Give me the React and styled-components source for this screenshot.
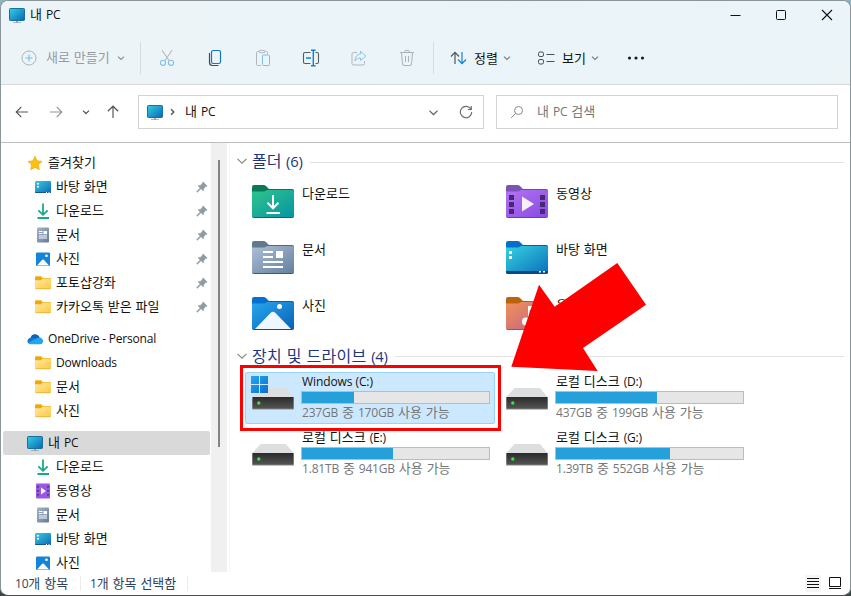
import React from "react";
import styled, { createGlobalStyle, css } from "styled-components";

const Global = createGlobalStyle`
  * { box-sizing: border-box; }
  html, body { margin: 0; padding: 0; }
  body {
    background: linear-gradient(#8fb3bc 0, #8fb3bc 30px, #3a4645 560px);
    font-family: "Noto Sans CJK KR", "Open Sans", sans-serif;
    font-size: 13px;
    color: #111;
    overflow: hidden;
  }
`;

/* ---------- text ---------- */

const TextLine = styled.span`
  display: block;
  white-space: pre;
  line-height: 18px;
  font-size: ${(p) => p.$size || 13}px;
  letter-spacing: ${(p) => p.$ls || 0}px;
  word-spacing: ${(p) => p.$ws}px;
  color: ${(p) => p.$color || "#111"};
`;

const Latin = styled.span`
  font-family: "Open Sans", "Noto Sans", sans-serif;
  font-size: 0.925em;
  letter-spacing: ${(p) => p.$lls ?? -0.2}px;
`;

function Text({ children, size, ls, lls, ws, color }) {
  const value = String(children);
  const parts = value.match(/[\uAC00-\uD7A3]+|[^\uAC00-\uD7A3]+/g);
  const spacing = ws ?? (/[\uAC00-\uD7A3]/.test(value) ? 1 : 0);
  return (
    <TextLine $size={size} $ls={ls} $ws={spacing} $color={color}>
      {parts.map((part, i) =>
        /[\uAC00-\uD7A3]/.test(part) ? (
          <span key={i}>{part}</span>
        ) : (
          <Latin key={i} $lls={lls}>{part}</Latin>
        )
      )}
    </TextLine>
  );
}

/* ---------- window chrome ---------- */

const Window = styled.div`
  position: relative;
  width: 851px;
  height: 596px;
  display: flex;
  flex-direction: column;
  background: #fff;
  border: 1px solid #8b969b;
  border-bottom-color: #475250;
  border-radius: 8px;
  overflow: hidden;
`;

const Header = styled.header`
  height: 84px;
  flex: none;
  background: linear-gradient(100deg, #edf4f8 0%, #ebf4f8 45%, #eaf4f9 75%, #ecf4f8 100%);
  border-bottom: 1px solid #d5d9dc;
`;

const TitleBar = styled.div`
  display: flex;
  align-items: center;
  height: 29px;
  padding: 0 14px 0 8px;
`;

const TitleName = styled.div`
  display: flex;
  align-items: center;
  gap: 5px;
  flex: 1;
  & > svg { margin-bottom: 1px; }
  & > span { margin-bottom: 2px; }
`;

const WindowButtons = styled.div`
  display: flex;
  gap: 34px;
  padding: 0 3px 1px 0;
  svg { display: block; }
`;

const Toolbar = styled.div`
  display: flex;
  align-items: center;
  height: 54px;
  padding: 2px 0 0;
`;

const ToolButton = styled.div`
  display: flex;
  align-items: center;
  flex: none;
  width: ${(p) => p.$w || 48}px;
  padding-left: ${(p) => p.$pl || 0}px;
  gap: ${(p) => p.$gap || 8}px;
  ${(p) => !p.$labelled && css`justify-content: center;`}
  & > span { margin: 0 -1px 1px 1px; }
`;

const Separator = styled.div`
  flex: none;
  width: 1px;
  height: 32px;
  margin-right: ${(p) => p.$mr || 0}px;
  margin-left: ${(p) => p.$ml || 0}px;
  background: #d6dde1;
`;

const NavBar = styled.div`
  display: flex;
  align-items: center;
  flex: none;
  height: 58px;
  padding: 0 12px 3px 14px;
  border-bottom: 1px solid #bdbdbd;
`;

const NavArrows = styled.div`
  display: flex;
  align-items: center;
  width: 123px;
  svg { flex: none; }
`;

const Arrow = styled.div`
  display: flex;
  justify-content: center;
  width: ${(p) => p.$w}px;
`;

const Field = styled.div`
  display: flex;
  align-items: center;
  height: 34px;
  border: 1px solid #d2d3d4;
  background: #fff;
  & span { margin-bottom: 1px; }
`;

const AddressField = styled(Field)`
  width: 346px;
  padding: 0 10px 0 8px;
  margin-right: 12px;
`;

const Crumb = styled.div`
  display: flex;
  align-items: center;
  flex: 1;
  gap: 6px;
  & > svg:first-child { margin-bottom: 1px; }
  & > span { margin-left: 3px; }
`;

const AddressTools = styled.div`
  display: flex;
  align-items: center;
  gap: 20px;
`;

const SearchField = styled(Field)`
  width: 342px;
  padding-left: 13px;
  gap: 13px;
`;

/* ---------- body ---------- */

const Body = styled.div`
  display: flex;
  height: 429px;
  flex: none;
  overflow: hidden;
`;

const Sidebar = styled.nav`
  width: 210px;
  flex: none;
  padding: 8px 1px 0 2px;
  overflow: hidden;
`;

const SideGroup = styled.div`
  margin-bottom: 8px;
`;

const SideItem = styled.div`
  display: flex;
  align-items: center;
  height: 24px;
  padding: 0 2px 0 ${(p) => (p.$root ? 24 : 32)}px;
  gap: 5px;
  border-radius: 2px;
  background: ${(p) => (p.$active ? "#d9d9d9" : "transparent")};
`;

const SideLabel = styled.div`
  flex: 1;
  margin-top: -2px;
`;

const ScrollTrack = styled.div`
  width: 16px;
  flex: none;
  background: #f0f0f0;
  padding: 17px 0 0 7px;
`;

const ScrollThumb = styled.div`
  width: 2px;
  height: 287px;
  background: #858585;
`;

const Content = styled.main`
  flex: 1;
  margin-left: 2px;
  border-left: 1px solid #f7f7f7;
  padding-left: 7px;
`;

const SectionHead = styled.div`
  display: flex;
  align-items: center;
  height: ${(p) => p.$h}px;
  padding: ${(p) => p.$pt || 0}px 6px ${(p) => p.$pb || 0}px 0;
  &::after {
    content: "";
    flex: 1;
    height: 1px;
    margin: 3px 0 0 7px;
    background: #e2e2e2;
  }
  svg { flex: none; margin: 1px 4px 0 -1px; }
`;

const Grid = styled.div`
  display: grid;
  grid-template-columns: 250px 250px;
  gap: 4px;
  padding-left: 8px;
`;

const Tile = styled.div`
  display: flex;
  height: 52px;
  padding-left: ${(p) => (p.$drive ? 5 : 6)}px;
  border: 1px solid ${(p) => (p.$selected ? "#99d1ff" : "transparent")};
  background: ${(p) => (p.$selected ? "#cce8ff" : "transparent")};
  border-radius: 2px;
  & > svg { flex: none; }
`;

const FolderName = styled.div`
  padding: 7px 0 0 8px;
`;

const DriveInfo = styled.div`
  display: flex;
  flex-direction: column;
  padding-left: 6px;
  & > span { padding-left: 1px; margin-top: -1px; }
`;

const Meter = styled.div`
  width: 189px;
  height: 13px;
  border: 1px solid #bcbcbc;
  background: #e6e6e6;
`;

const MeterFill = styled.div`
  height: 100%;
  background: #26a0da;
`;

const StatusBar = styled.footer`
  display: flex;
  align-items: center;
  flex: 1;
  padding: 0 7px 1px 14px;
`;

const StatusText = styled.div`
  width: ${(p) => p.$w}px;
`;

const StatusRule = styled.div`
  width: 1px;
  height: 15px;
  background: #ececec;
  margin-right: ${(p) => p.$mr || 0}px;
`;

const ViewModes = styled.div`
  display: flex;
  gap: 6px;
  margin-left: auto;
  svg { display: block; }
`;

const ModeButton = styled.div`
  padding: 2px 1px;
  background: ${(p) => (p.$on ? "#f5f5f5" : "transparent")};
`;

const Highlight = styled.div`
  position: absolute;
  left: 239px;
  top: 364px;
  width: 261px;
  height: 66px;
  border: 3px solid #fe0000;
`;

const Pointer = styled.svg`
  position: absolute;
  left: 509px;
  top: 261px;
`;

/* ---------- icons ---------- */

const Monitor = () => (
  <svg width="16" height="16" viewBox="0 0 16 16">
    <defs>
      <linearGradient id="mon" x1="0" y1="0" x2="1" y2="1">
        <stop offset="0" stopColor="#35cfe4" />
        <stop offset="1" stopColor="#0b66b4" />
      </linearGradient>
    </defs>
    <rect x="0.5" y="1.5" width="15" height="12" rx="0.8" fill="url(#mon)" stroke="#14709f" strokeWidth="1" />
    <path d="M7 14h2v1.2h3v.8H4v-.8h3z" fill="#9aa4ab" />
  </svg>
);

const Chevron = ({ size = 8, color = "#777", w = 1.1 }) => (
  <svg width={size} height={size} viewBox="0 0 8 8" fill="none" stroke={color} strokeWidth={w}>
    <path d="M1 2.6 4 5.5 7 2.6" />
  </svg>
);

const PlusCircle = () => (
  <svg width="16" height="16" viewBox="0 0 16 16" fill="none">
    <circle cx="8" cy="8" r="7" stroke="#adb4b8" />
    <path d="M8 4.5v7M4.5 8h7" stroke="#76b9e6" />
  </svg>
);

const Scissors = () => (
  <svg width="16" height="18" viewBox="0 0 16 18" fill="none">
    <path d="M3 1.2 10.4 12M13 1.2 5.6 12" stroke="#b4babe" strokeWidth="1.1" />
    <circle cx="4" cy="13.8" r="2.6" stroke="#83c0ea" strokeWidth="1.1" />
    <circle cx="12" cy="13.8" r="2.6" stroke="#83c0ea" strokeWidth="1.1" />
  </svg>
);

const Copy = () => (
  <svg width="16" height="18" viewBox="0 0 16 18" fill="none">
    <path d="M2.5 4v9.500A3 3 0 0 0 5.500 16.500h6" stroke="#454b50" strokeWidth="1.200" />
    <rect x="4.500" y="1.500" width="9" height="13" rx="1.800" stroke="#1276c8" strokeWidth="1.200" />
  </svg>
);

const Paste = () => (
  <svg width="16" height="18" viewBox="0 0 16 18" fill="none">
    <path d="M6 16.500H2.500a1 1 0 0 1-1-1v-12a1 1 0 0 1 1-1h9a1 1 0 0 1 1 1v1.500" stroke="#b3b8bc" />
    <rect x="4" y="1.400" width="6" height="2.300" rx="1" stroke="#b3b8bc" fill="#eaf3f8" />
    <rect x="7.500" y="6" width="7" height="10.500" rx="1" stroke="#7fbde8" />
  </svg>
);

const Rename = () => (
  <svg width="18" height="18" viewBox="0 0 18 18" fill="none">
    <path d="M8.500 3.500H3a1.500 1.500 0 0 0-1.500 1.500v8A1.500 1.500 0 0 0 3 14.500h5.500M13.500 3.500H15A1.500 1.500 0 0 1 16.500 5v8a1.500 1.500 0 0 1-1.500 1.500h-1.500" stroke="#555c61" strokeWidth="1.100" />
    <path d="M11.300 1.500v15M9 1.300h4.600M9 16.700h4.600M4 9h5" stroke="#1680d0" strokeWidth="1.400" />
  </svg>
);

const Share = () => (
  <svg width="18" height="18" viewBox="0 0 18 18" fill="none">
    <path d="M7 3.500H3.500a1.500 1.500 0 0 0-1.500 1.500v9.500A1.500 1.500 0 0 0 3.500 16h9.500a1.500 1.500 0 0 0 1.500-1.500V12" stroke="#b1b7bb" />
    <path d="M10.500 2.300 15.800 7l-5.300 4.500V9C8 9 6.300 9.800 5 12c0-4 2-6.700 5.500-7z" stroke="#88c3ea" strokeLinejoin="round" />
  </svg>
);

const Trash = () => (
  <svg width="16" height="18" viewBox="0 0 16 18" fill="none" stroke="#acb2b6">
    <path d="M1 3.500h14M5.500 3.300a2.500 2 0 0 1 5 0M2.500 3.500l1 11.500a1.500 1.500 0 0 0 1.500 1.500h6a1.500 1.500 0 0 0 1.500-1.500l1-11.500M6.500 7v6M9.500 7v6" />
  </svg>
);

const Sort = () => (
  <svg width="17" height="14" viewBox="0 0 17 14" fill="none" strokeWidth="1.200">
    <path d="M5 13V1.500M1 5.500 5 1.300 9 5.500" stroke="#50565b" />
    <path d="M12 1v11.500M8 8.500l4 4.200 4-4.200" stroke="#1680d0" />
  </svg>
);

const ViewIcon = () => (
  <svg width="17" height="14" viewBox="0 0 17 14" fill="none" stroke="#4c5156">
    <rect x="0.500" y="1" width="5" height="4.500" rx="1.500" />
    <rect x="0.500" y="8.500" width="5" height="4.500" rx="1.500" />
    <path d="M8.500 3.500h8M8.500 10.500h8" />
  </svg>
);

const Dots = () => (
  <svg width="18" height="4" viewBox="0 0 18 4" fill="#1c1f21">
    <circle cx="2.500" cy="2" r="1.600" />
    <circle cx="9" cy="2" r="1.600" />
    <circle cx="15.500" cy="2" r="1.600" />
  </svg>
);

const ArrowGlyph = ({ color = "#55595c", turn = 0 }) => (
  <svg width="14" height="14" viewBox="0 0 14 14" fill="none" stroke={color} strokeWidth="1.200">
    <path transform={`rotate(${turn} 7 7)`} d="M13 7H1.300M6.300 1.800 1.200 7l5.100 5.200" />
  </svg>
);

const Refresh = () => (
  <svg width="14" height="14" viewBox="0 0 14 14" fill="none" stroke="#6b6e71" strokeWidth="1.150">
    <path d="M12 4.300A5.700 5.700 0 1 0 12.700 7M12.300 1v3.500H8.800" />
  </svg>
);

const Magnifier = () => (
  <svg width="14" height="14" viewBox="0 0 14 14" fill="none" stroke="#85898d">
    <circle cx="8.500" cy="5.500" r="4" />
    <path d="M5.600 8.400 1.200 12.800" />
  </svg>
);

const Star = () => (
  <svg width="16" height="16" viewBox="0 0 16 16">
    <path d="M8 1.300 10.100 5.800l4.900.600-3.600 3.400.900 4.900L8 12.400l-4.300 2.300.900-4.900L1 6.400l4.900-.600z" fill="#fdc112" stroke="#f3a80c" strokeWidth="0.700" strokeLinejoin="round" />
  </svg>
);

const DesktopSmall = () => (
  <svg width="16" height="16" viewBox="0 0 16 16">
    <defs>
      <linearGradient id="ds" x1="0" y1="0" x2="1" y2="1">
        <stop offset="0" stopColor="#38cde0" />
        <stop offset="1" stopColor="#0c69b8" />
      </linearGradient>
    </defs>
    <rect y="2" width="16" height="12" rx="1.200" fill="url(#ds)" />
    <path d="M0 13h16a1 1 0 0 1-1 1H1a1 1 0 0 1-1-1z" fill="#0c5596" />
    <path d="M2 4h2v1.500H2zM2 7h2v1.500H2zM11 13h1v1h-1zM13.500 13h1v1h-1z" fill="#fff" />
  </svg>
);

const DownloadSmall = () => (
  <svg width="16" height="16" viewBox="0 0 16 16" fill="none" stroke="#18a98b" strokeWidth="1.800">
    <path d="M8 0.500v11M3.300 7.300 8 11.800l4.700-4.500M2.500 15h11.500" />
  </svg>
);

const DocumentSmall = () => (
  <svg width="16" height="16" viewBox="0 0 16 16">
    <defs>
      <linearGradient id="doc" x1="0" y1="0" x2="1" y2="1">
        <stop offset="0" stopColor="#a5b5c9" />
        <stop offset="1" stopColor="#637b98" />
      </linearGradient>
    </defs>
    <rect x="2" y="0.500" width="12" height="15" rx="1" fill="url(#doc)" />
    <path d="M4 4h3.500v1H4zM4 6h3.500v1H4zM4 8.500h8v1H4zM4 10.500h8v1H4zM8.500 4H12v3.200H8.500z" fill="#fff" />
  </svg>
);

const PictureSmall = () => (
  <svg width="16" height="16" viewBox="0 0 16 16">
    <rect x="1" y="1.500" width="14" height="13.500" rx="1" fill="#1584d6" />
    <path d="M2 14.500 7.200 8.800a1.100 1.100 0 0 1 1.600 0L14 14.500z" fill="#fff" />
    <circle cx="11.500" cy="4.800" r="1.300" fill="#fff" />
  </svg>
);

const VideoSmall = () => (
  <svg width="16" height="16" viewBox="0 0 16 16">
    <rect x="1" y="0.500" width="14" height="15" rx="1" fill="#9a57e4" />
    <path d="M2.200 3h1.600v1.600H2.200zM2.200 7h1.600v1.600H2.200zM2.200 11h1.600v1.600H2.200zM12.200 3h1.600v1.600h-1.600zM12.200 7h1.600v1.600h-1.600zM12.200 11h1.600v1.600h-1.600z" fill="#46227c" />
    <path d="M6 4.500 11 8 6 11.500z" fill="#fff" />
  </svg>
);

const FolderSmall = () => (
  <svg width="16" height="16" viewBox="0 0 16 16">
    <defs>
      <linearGradient id="fs" x1="0" y1="0" x2="1" y2="1">
        <stop offset="0" stopColor="#ffe7a2" />
        <stop offset="1" stopColor="#fccb45" />
      </linearGradient>
    </defs>
    <path d="M0 2.500a1.300 1.300 0 0 1 1.300-1.300h4.500L8 3h6.800A1.200 1.200 0 0 1 16 4.200V7H0z" fill="#efa90f" />
    <path d="M0 5.300h5.800L8 3.500h7a1 1 0 0 1 1 1v8.500a1 1 0 0 1-1 1H1a1 1 0 0 1-1-1z" fill="url(#fs)" />
    <path d="M0.400 13.700h15.200" stroke="#dfa021" strokeWidth="0.600" />
  </svg>
);

const Cloud = () => (
  <svg width="16" height="16" viewBox="0 0 16 16">
    <path d="M3.500 7a4.800 4.800 0 0 1 9-1l.500 3.500L5 12.500z" fill="#0864b8" />
    <path d="M3.600 6.700A3.500 3.500 0 0 0 1 12l6.500-.500 3-3.300-4-1.500a4 4 0 0 0-2.900 0z" fill="#1178cf" />
    <path d="M1 12a3.300 3.300 0 0 0 2.600 1.300H13A3.200 3.200 0 0 0 15.600 8.500 4 4 0 0 0 10 7z" fill="#27a4ee" />
  </svg>
);

const Pin = () => (
  <svg width="12" height="12" viewBox="0 0 12 12">
    <path d="M7 .8 11.200 5l-1.500.500L7.800 7.400 7.300 9.900 5 7.700 1.300 11.300l-.700-.700L4.200 7 2 4.700l2.600-.500 1.900-1.900z" fill="#919ba5" stroke="#919ba5" strokeWidth=".5" strokeLinejoin="round" />
  </svg>
);

const FOLDERS = {
  download: { tab: "#087a59", from: "#2ec48c", to: "#0795a4", edge: "#0a6a6a" },
  video: { tab: "#7a54b4", from: "#b273f4", to: "#8a4be0", edge: "#6c3eae" },
  document: { tab: "#5f7a8a", from: "#adbfd6", to: "#64809f", edge: "#3f5872" },
  desktop: { tab: "#0570cb", from: "#36d2df", to: "#0b70bd", edge: "#0b4a7c" },
  picture: { tab: "#0471d2", from: "#28a7ee", to: "#0762b7", edge: "#0b4c8a" },
  music: { tab: "#bd630f", from: "#f0925a", to: "#c15f86", edge: "#a0583e" },
};

const FOLDER_ART = {
  download: (
    <path d="M21 10v13M15.500 17.700 21 23.300l5.500-5.600M14.500 28h13.500" fill="none" stroke="#fff" strokeWidth="2" />
  ),
  video: (
    <>
      <path d="M3 10h5v5H3zM3 17h5v5H3zM3 24h5v5H3zM34 10h5v5h-5zM34 17h5v5h-5zM34 24h5v5h-5z" fill="#472878" />
      <path d="M16 11.500 28 19 16 26.500z" fill="#f5f0fa" />
    </>
  ),
  document: (
    <path d="M11 10h10v2H11zM11 15h10v2H11zM11 20h20v2H11zM11 25h20v2H11zM24 10h7v7h-7z" fill="#fff" />
  ),
  desktop: (
    <>
      <path d="M0 30h42v1a2 2 0 0 1-2 2H2a2 2 0 0 1-2-2z" fill="#0b4a80" />
      <path d="M3 10h3v3H3zM3 15h3v3H3zM33 30h2v1.500h-2zM37 30h2v1.500h-2z" fill="#fff" />
    </>
  ),
  picture: (
    <>
      <path d="M3 32 18.500 16a3.500 3.500 0 0 1 5 0L39 32z" fill="#eef7fe" />
      <circle cx="27.500" cy="9.500" r="2.500" fill="#fff" />
    </>
  ),
  music: (
    <>
      <path d="M22 9h4v4h-2.500v12H22z" fill="#fff" />
      <circle cx="20" cy="24.500" r="4" fill="#fff" />
    </>
  ),
};

const FolderLarge = ({ kind }) => {
  const c = FOLDERS[kind];
  return (
    <svg width="42" height="50" viewBox="0 -8 42 50">
      <defs>
        <linearGradient id={`f-${kind}`} x1="0" y1="0" x2="1" y2="1">
          <stop offset="0" stopColor={c.from} />
          <stop offset="1" stopColor={c.to} />
        </linearGradient>
      </defs>
      <path d="M0 2a2 2 0 0 1 2-2h9.500a4 4 0 0 1 2.500 1l3 3h23a2 2 0 0 1 2 2v6H0z" fill={c.tab} />
      <path d="M0 7h11.500a4 4 0 0 0 2.500-1l1-.800a3 3 0 0 1 2-.700h23.500A1.500 1.500 0 0 1 42 6v25a2 2 0 0 1-2 2H2a2 2 0 0 1-2-2z" fill={c.edge} />
      <path d="M0 6.500h11.500A4 4 0 0 0 14 5.700l1-.600H40.500A1.500 1.500 0 0 1 42 6.500V30.500a1.500 1.500 0 0 1-1.500 1.500h-39A1.500 1.500 0 0 1 0 30.500z" fill={`url(#f-${kind})`} />
      {FOLDER_ART[kind]}
    </svg>
  );
};

const Drive = ({ system }) => (
  <svg width="44" height="50" viewBox="-1 0 44 50">
    <defs>
      <linearGradient id="drv" x1="0" y1="0" x2="0" y2="1">
        <stop offset="0" stopColor="#2b2b2b" />
        <stop offset="1" stopColor="#545454" />
      </linearGradient>
      <linearGradient id="win" x1="0" y1="0" x2="1" y2="1">
        <stop offset="0" stopColor="#27a7ef" />
        <stop offset="1" stopColor="#0870cf" />
      </linearGradient>
    </defs>
    <path d="M8.500 15h25.500L42 24.500H0z" fill="#dddee0" />
    <rect x="0" y="24" width="42" height="12.700" rx="1" fill="#aaa" />
    <rect x="0.500" y="24" width="41" height="11.700" rx="0.500" fill="url(#drv)" />
    <circle cx="6.800" cy="30" r="1.700" fill="#3fe045" />
    {system && (
      <path d="M-1 3h8v8h-8zM8 3h8v8H8zM-1 12h8v8h-8zM8 12h8v8H8z" fill="url(#win)" />
    )}
  </svg>
);

/* ---------- data ---------- */

const SIDE = [
  {
    root: { label: "즐겨찾기", icon: Star },
    items: [
      { label: "바탕 화면", icon: DesktopSmall, pin: true },
      { label: "다운로드", icon: DownloadSmall, pin: true },
      { label: "문서", icon: DocumentSmall, pin: true },
      { label: "사진", icon: PictureSmall, pin: true },
      { label: "포토샵강좌", icon: FolderSmall, pin: true },
      { label: "카카오톡 받은 파일", icon: FolderSmall, pin: true },
    ],
  },
  {
    root: { label: "OneDrive - Personal", icon: Cloud },
    items: [
      { label: "Downloads", icon: FolderSmall },
      { label: "문서", icon: FolderSmall },
      { label: "사진", icon: FolderSmall },
    ],
  },
  {
    root: { label: "내 PC", icon: Monitor, active: true },
    items: [
      { label: "다운로드", icon: DownloadSmall },
      { label: "동영상", icon: VideoSmall },
      { label: "문서", icon: DocumentSmall },
      { label: "바탕 화면", icon: DesktopSmall },
      { label: "사진", icon: PictureSmall },
    ],
  },
];

const FOLDER_TILES = [
  ["download", "다운로드"],
  ["video", "동영상"],
  ["document", "문서"],
  ["desktop", "바탕 화면"],
  ["picture", "사진"],
  ["music", "음악"],
];

const DRIVES = [
  { name: "Windows (C:)", used: 52, info: "237GB 중 170GB 사용 가능", system: true },
  { name: "로컬 디스크 (D:)", used: 101, info: "437GB 중 199GB 사용 가능" },
  { name: "로컬 디스크 (E:)", used: 91, info: "1.81TB 중 941GB 사용 가능" },
  { name: "로컬 디스크 (G:)", used: 114, info: "1.39TB 중 552GB 사용 가능" },
];

function SideRow({ entry, root }) {
  const Icon = entry.icon;
  return (
    <SideItem $root={root} $active={entry.active}>
      <Icon />
      <SideLabel>
        <Text>{entry.label}</Text>
      </SideLabel>
      {entry.pin && <Pin />}
    </SideItem>
  );
}

export default function App() {
  return (
    <>
      <Global />
      <Window>
        <Header>
          <TitleBar>
            <TitleName>
              <Monitor />
              <Text>내 PC</Text>
            </TitleName>
            <WindowButtons>
              <svg width="12" height="12" viewBox="0 0 12 12"><path d="M1.500 6.500h10" stroke="#111" /></svg>
              <svg width="12" height="12" viewBox="0 0 12 12"><rect x="1.500" y="1.500" width="9" height="9" rx="1" fill="none" stroke="#111" /></svg>
              <svg width="12" height="12" viewBox="0 0 12 12"><path d="M1 1l10 10M11 1 1 11" stroke="#111" strokeWidth="1.100" /></svg>
            </WindowButtons>
          </TitleBar>
          <Toolbar>
            <ToolButton $labelled $w={139} $pl={20} $gap={8}>
              <PlusCircle />
              <Text color="#969b9f">새로 만들기</Text>
              <Chevron color="#888d91" />
            </ToolButton>
            <Separator $mr={2} />
            <ToolButton><Scissors /></ToolButton>
            <ToolButton><Copy /></ToolButton>
            <ToolButton><Paste /></ToolButton>
            <ToolButton><Rename /></ToolButton>
            <ToolButton><Share /></ToolButton>
            <ToolButton><Trash /></ToolButton>
            <Separator $ml={2} />
            <ToolButton $labelled $w={88} $pl={16} $gap={6}>
              <Sort />
              <Text>정렬</Text>
              <Chevron />
            </ToolButton>
            <ToolButton $labelled $w={90} $pl={16} $gap={6}>
              <ViewIcon />
              <Text>보기</Text>
              <Chevron />
            </ToolButton>
            <ToolButton><Dots /></ToolButton>
          </Toolbar>
        </Header>

        <NavBar>
          <NavArrows>
            <Arrow $w={14}><ArrowGlyph /></Arrow>
            <Arrow $w={58}><ArrowGlyph turn={180} color="#929699" /></Arrow>
            <Arrow $w={5}><Chevron color="#55595c" w={1.3} /></Arrow>
            <Arrow $w={52}><ArrowGlyph turn={90} /></Arrow>
          </NavArrows>
          <AddressField>
            <Crumb>
              <Monitor />
              <svg width="7" height="8" viewBox="0 0 7 8" fill="none" stroke="#555" strokeWidth="1.400"><path d="M2 1.200 4.800 4 2 6.800" /></svg>
              <Text>내 PC</Text>
            </Crumb>
            <AddressTools>
              <Chevron size={11} color="#666" w={0.9} />
              <Refresh />
            </AddressTools>
          </AddressField>
          <SearchField>
            <Magnifier />
            <Text color="#72767a">내 PC 검색</Text>
          </SearchField>
        </NavBar>

        <Body>
          <Sidebar>
            {SIDE.map((group) => (
              <SideGroup key={group.root.label}>
                <SideRow entry={group.root} root />
                {group.items.map((entry) => (
                  <SideRow key={entry.label} entry={entry} />
                ))}
              </SideGroup>
            ))}
          </Sidebar>
          <ScrollTrack><ScrollThumb /></ScrollTrack>
          <Content>
            <SectionHead $h={33} $pt={2}>
              <Chevron size={12} color="#8a8a8a" w={0.8} />
              <Text size={16} color="#1f3580">폴더 (6)</Text>
            </SectionHead>
            <Grid>
              {FOLDER_TILES.map(([kind, name]) => (
                <Tile key={kind}>
                  <FolderLarge kind={kind} />
                  <FolderName><Text>{name}</Text></FolderName>
                </Tile>
              ))}
            </Grid>
            <SectionHead $h={32} $pb={2}>
              <Chevron size={12} color="#8a8a8a" w={0.8} />
              <Text size={16} ls={0.3} color="#1f3580">장치 및 드라이브 (4)</Text>
            </SectionHead>
            <Grid>
              {DRIVES.map((d) => (
                <Tile key={d.name} $drive $selected={d.system}>
                  <Drive system={d.system} />
                  <DriveInfo>
                    <Text lls={d.system ? -0.1 : undefined}>{d.name}</Text>
                    <Meter><MeterFill style={{ width: d.used }} /></Meter>
                    <Text color="#747678">{d.info}</Text>
                  </DriveInfo>
                </Tile>
              ))}
            </Grid>
          </Content>
        </Body>

        <StatusBar>
          <StatusText $w={65}><Text color="#30425a">10개 항목</Text></StatusText>
          <StatusRule $mr={9} />
          <StatusText $w={97}><Text color="#30425a">1개 항목 선택함</Text></StatusText>
          <StatusRule />
          <ViewModes>
            <ModeButton $on>
              <svg width="14" height="13" viewBox="0 0 14 13" stroke="#111"><path d="M1 1.500h12M1 4.500h12M1 7.500h12M1 10.500h12" /></svg>
            </ModeButton>
            <ModeButton>
              <svg width="14" height="13" viewBox="0 0 14 13" stroke="#111" fill="none"><path d="M1.500 .500h11v9h-11zM1 11.500h12" /></svg>
            </ModeButton>
          </ViewModes>
        </StatusBar>

        <Highlight />
        <Pointer width="140" height="115" viewBox="510 262 140 115">
          <path d="M511.300 366.700 539 284.700 554.700 306.700 617.300 263 646 304.700 583 348 597.700 371z" fill="#fe0000" />
        </Pointer>
      </Window>
    </>
  );
}
